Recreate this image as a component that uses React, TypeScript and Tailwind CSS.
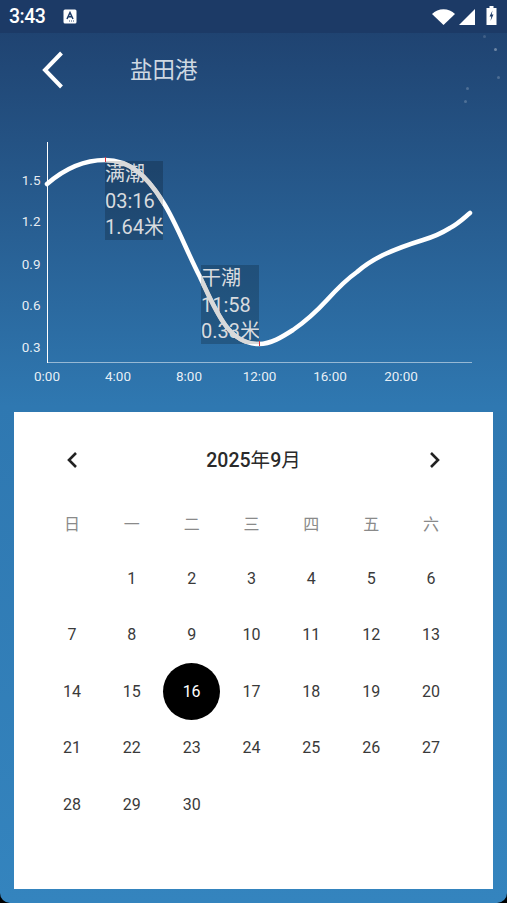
const FONT = "font-['Roboto','Noto_Sans_CJK_SC',sans-serif]";

const WEEKDAYS = ['日', '一', '二', '三', '四', '五', '六'];
const DAYS: (number | null)[] = [null, ...Array.from({ length: 30 }, (_, i) => i + 1)];
const TODAY = 16;

const STARS = [
  [484, 36, 0.15],
  [495, 49, 0.35],
  [498, 77, 0.2],
  [467, 88, 0.2],
  [465, 101, 0.2],
] as const;

const Y_LABELS = [
  ['1.5', 185],
  ['1.2', 226],
  ['0.9', 269],
  ['0.6', 310],
  ['0.3', 352],
] as const;

const X_LABELS = [
  ['0:00', 47],
  ['4:00', 118],
  ['8:00', 189],
  ['12:00', 259.5],
  ['16:00', 330],
  ['20:00', 401],
] as const;

const TIDE_PATH =
  'M47 184 C62 171 82 160 105 160 C130 160 147 176 163 202 C176 222 187 252 200 277 C209 296 216 313 226 326 C235 338 246 344 259 344 C271 344 282 337 293 330 C306 321 316 312 327 300 C337 289 347 279 357 272 C366 264 375 259 383 255 C396 249 410 244 423 240 C433 237 442 233 450 228 C458 224 464 218 470 213';

// box sits over the curve, which shows through it in grey
function Tooltip({ title, time, level, x, y, className }: { title: string; time: string; level: string; x: number; y: number; className: string }) {
  return (
    <div className={`absolute w-[58px] h-[79px] overflow-hidden bg-black/20 text-[20px] leading-[26.5px] text-[#d8dbdf] whitespace-nowrap ${className}`}>
      <svg width="58" height="79" viewBox={`${x} ${y} 58 79`} className="absolute left-0 top-0">
        <path d={TIDE_PATH} stroke="#d9d9d9" strokeWidth="4.5" fill="none" />
      </svg>
      <div className="relative">{title}</div>
      <div className="relative">{time}</div>
      <div className="relative">{level}</div>
    </div>
  );
}

export default function App() {
  return (
    <div className={`h-[903px] w-[507px] bg-black overflow-hidden ${FONT}`}>
      <div className="relative flex h-full flex-col rounded-b-[10px] overflow-hidden bg-gradient-to-b from-[#1e3f6c] via-[#2f78b1] via-[45%] to-[#3484be]">
        {/* Status bar */}
        <div className="flex h-[33px] items-center bg-[#1c3a66] pl-[9px] pr-[10px] text-white">
          <span className="text-[19.5px] font-medium leading-none tracking-tight">3:43</span>
          <svg width="14" height="15" viewBox="0 0 14 15" className="ml-[18px]">
            <rect x="0.5" y="0.5" width="13" height="14" rx="1.5" fill="#fff" />
            <path d="M4 10 L7 3.5 L10 10 M5.2 7.8 H8.8" stroke="#1c3a66" strokeWidth="1.5" fill="none" />
            <path d="M8 12 H9 M10 12 H11 M6 12 H7" stroke="#1c3a66" strokeWidth="0.9" />
          </svg>
          <div className="ml-auto flex items-center">
            <svg width="23" height="16" viewBox="0 0 23 16">
              <path d="M0 5 C6 -1.5 17 -1.5 23 5 L11.5 16 Z" fill="#fff" />
            </svg>
            <svg width="16" height="16" viewBox="0 0 16 16" className="ml-[4px]">
              <path d="M16 0 V16 H0 Z" fill="#fff" />
            </svg>
            <svg width="11" height="19" viewBox="0 0 11 19" className="ml-[11px] mb-[2px]">
              <path d="M3.5 0 H7.5 V2 H10.5 V19 H0.5 V2 H3.5 Z" fill="#fff" />
              <path d="M6.5 4.5 L3.5 10.5 H5.3 L4.5 15 L7.5 8.5 H5.7 Z" fill="#1c3a66" />
            </svg>
          </div>
        </div>

        {/* Background stars */}
        {STARS.map(([x, y, o]) => (
          <span
            key={`${x}-${y}`}
            className="absolute size-[3px] rounded-full bg-white"
            style={{ left: x - 1.5, top: y - 1.5, opacity: o }}
          />
        ))}

        {/* Header */}
        <div className="flex h-[75px] items-center">
          <svg width="26" height="40" viewBox="0 0 26 40" className="ml-[40px] mt-[-1px]">
            <path d="M21.5 3 L5 20 L21.5 37" stroke="#fff" strokeWidth="4" fill="none" />
          </svg>
          <span className="ml-[64px] text-[22.5px] leading-none text-[#cfd8e2]">盐田港</span>
        </div>

        {/* Tide chart */}
        <div className="relative h-[304px] w-full">
          <svg width="507" height="304" viewBox="0 108 507 304" className="block">
            <path d={TIDE_PATH} stroke="#fff" strokeWidth="4.5" fill="none" strokeLinecap="round" />
            <path d="M47.5 142 V363" stroke="#fff" strokeWidth="1" />
            <path d="M47 362.5 H472" stroke="#fff" strokeOpacity="0.5" strokeWidth="1" />
            {Y_LABELS.map(([label, y]) => (
              <text key={label} x="40.5" y={y} textAnchor="end" fontSize="13.5" fill="#fff" fillOpacity="0.9">
                {label}
              </text>
            ))}
            {X_LABELS.map(([label, x]) => (
              <text key={label} x={x} y="381" textAnchor="middle" fontSize="13.5" fill="#fff" fillOpacity="0.9">
                {label}
              </text>
            ))}
          </svg>
          <Tooltip title="满潮" time="03:16" level="1.64米" x={105} y={161} className="left-[105px] top-[53px]" />
          <Tooltip title="干潮" time="11:58" level="0.33米" x={201} y={265} className="left-[201px] top-[157px]" />
          <span className="absolute left-[105px] top-[49px] h-[5px] w-px bg-[#d8313f]" />
          <span className="absolute left-[259px] top-[233px] h-[5px] w-px bg-[#d8313f]" />
        </div>

        {/* Calendar */}
        <div className="mx-[14px] h-[477px] bg-white pl-[28px] pr-[32px]">
          <div className="flex h-[96px] items-center justify-between">
            <svg width="14" height="18" viewBox="0 0 14 18" className="ml-[23px]">
              <path d="M11 2 L4 9 L11 16" stroke="#222" strokeWidth="2.6" fill="none" />
            </svg>
            <span className="text-[19.5px] font-medium leading-none text-[#2a2a2a] translate-y-[0.5px]">
              2025<span className="font-normal">年</span>9<span className="font-normal">月</span>
            </span>
            <svg width="14" height="18" viewBox="0 0 14 18" className="mr-[19px]">
              <path d="M3 2 L10 9 L3 16" stroke="#222" strokeWidth="2.6" fill="none" />
            </svg>
          </div>
          <div className="grid grid-cols-7">
            {WEEKDAYS.map((d) => (
              <div key={d} className="flex h-[34px] items-center justify-center text-[16px] text-[#8a8a8a]">
                {d}
              </div>
            ))}
          </div>
          <div className="mt-[8.5px] grid grid-cols-7 auto-rows-[56.5px]">
            {DAYS.map((d, i) => (
              <div key={i} className="flex items-center justify-center text-[16px] text-[#3a3a3a]">
                {d === TODAY ? (
                  <span className="flex size-[57px] items-center justify-center rounded-full bg-black text-white">{d}</span>
                ) : (
                  d
                )}
              </div>
            ))}
          </div>
        </div>
      </div>
    </div>
  );
}
